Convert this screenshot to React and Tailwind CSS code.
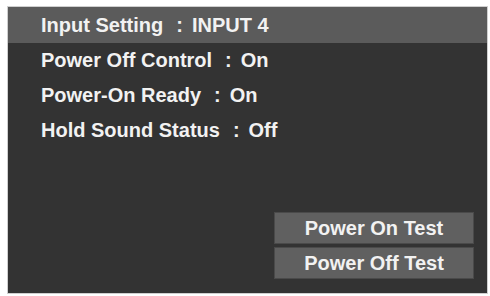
import React from "react";

const rows = [
  { label: "Input Setting", value: "INPUT 4", active: true },
  { label: "Power Off Control", value: "On" },
  { label: "Power-On Ready", value: "On" },
  { label: "Hold Sound Status", value: "Off" },
];

const buttons = ["Power On Test", "Power Off Test"];

const App = () => {
  return (
    <div
      className="w-[490px] h-[296px] bg-white pt-[6px] pl-[7px] pr-[2px] pb-[2px]"
      style={{ fontFamily: '"Liberation Sans", Arial, sans-serif' }}
    >
      <div className="h-full flex flex-col bg-[#333333] border border-[#cfcfcf] text-[#f2f2f2]">
        {/* Settings list */}
        <div className="flex flex-col">
          {rows.map((row, i) => (
            <div
              key={i}
              className={
                row.active
                  ? "h-[36px] leading-[36px] pl-[33px] bg-[#5b5b5b] text-[20px] font-bold"
                  : "h-[35px] leading-[35px] pl-[33px] text-[20px] font-bold"
              }
            >
              <span>{row.label}</span>
              <span className="ml-[13px] mr-[9px]">:</span>
              <span>{row.value}</span>
            </div>
          ))}
        </div>

        {/* Test buttons */}
        <div className="flex-1 flex flex-col items-end justify-end gap-[3px] pr-[13px] pb-[14px]">
          {buttons.map((label, i) => (
            <div
              key={i}
              className="w-[200px] h-[32px] flex items-center justify-center bg-[#606060] border border-[#4a4a4a] text-[20px] font-bold"
            >
              {label}
            </div>
          ))}
        </div>
      </div>
    </div>
  );
};

export default App;
